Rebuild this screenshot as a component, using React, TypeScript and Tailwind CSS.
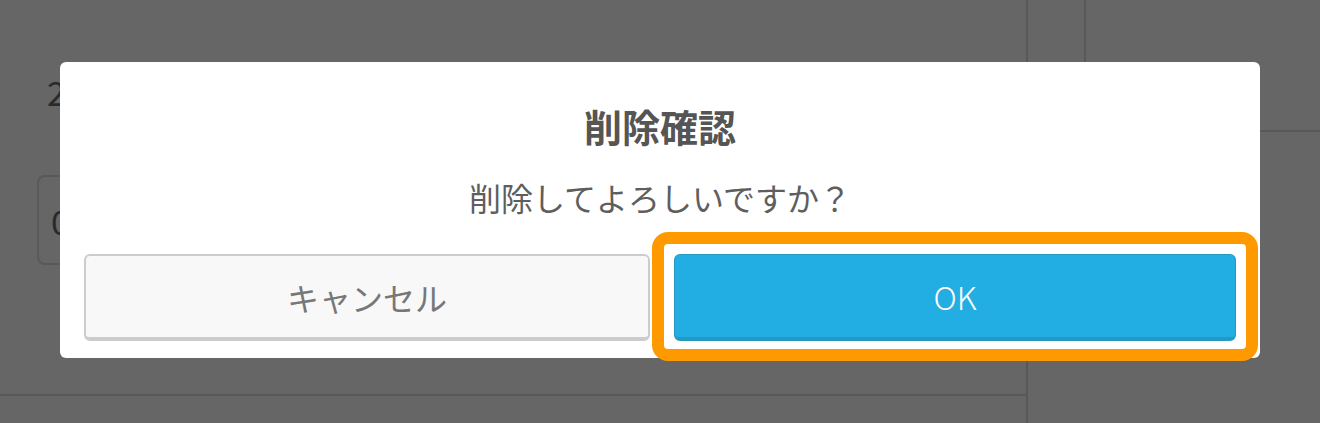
import React from "react";

export default function App() {
  const font = {
    fontFamily: '"Noto Sans CJK JP", "Noto Sans", "Liberation Sans", sans-serif',
  };
  return (
    <div
      className="relative w-[1320px] h-[423px] bg-[#666666] overflow-hidden"
      style={font}
    >
      {/* background page (dimmed) */}
      <div className="flex h-full">
        <div className="w-[1028px] h-full border-r-2 border-[#585858] flex flex-col">
          <div className="h-[396px] border-b-2 border-[#585858] flex flex-col">
            <div className="pl-[47px] pt-[72px] text-[34px] leading-[40px] text-[#2a2a2a]">
              2
            </div>
            <div className="ml-[37px] mt-[63px] w-[300px] h-[90px] border-2 border-[#595959] rounded-[8px] flex items-center pl-[12px] text-[34px] text-[#2a2a2a]">
              0
            </div>
          </div>
        </div>
        <div className="flex-1 flex">
          <div className="w-[56px]" />
          <div className="flex-1 h-[132px] border-l-2 border-b-2 border-[#585858]" />
        </div>
      </div>

      {/* dialog */}
      <div className="absolute left-[60px] top-[62px] w-[1200px] h-[296px] bg-white rounded-[6px] flex flex-col items-center pt-[40px]">
        <div className="text-[38px] leading-[48px] font-bold text-[#555555]">
          削除確認
        </div>
        <div className="mt-[23px] text-[32px] leading-[48px] text-[#5e5e5e]">
          削除してよろしいですか？
        </div>
        <div className="mt-[33px] w-full px-[24px] flex gap-[24px]">
          <button className="flex-1 h-[87px] bg-[#f8f8f8] border-2 border-b-4 border-[#cccccc] rounded-[6px] flex items-center justify-center text-[32px] text-[#777777]">
            キャンセル
          </button>
          <div className="relative flex-1 h-[87px]">
            <button className="w-full h-full bg-[#22aee2] border border-b-4 border-[#2598c6] rounded-[6px] flex items-center justify-center text-[32px] font-light text-white">
              OK
            </button>
            <div className="absolute left-[-22px] top-[-22px] right-[-22px] bottom-[-20px] border-[12px] border-[#ff9900] rounded-[16px] pointer-events-none" />
          </div>
        </div>
      </div>
    </div>
  );
}
